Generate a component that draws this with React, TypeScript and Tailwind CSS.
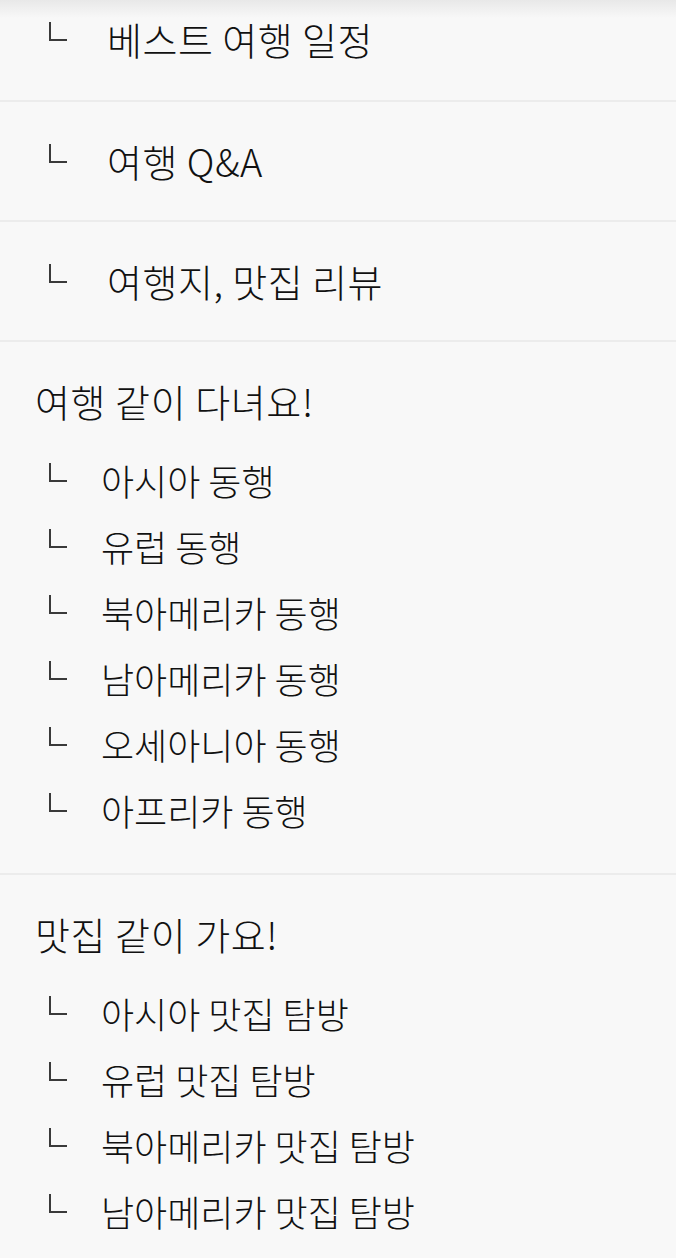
const font = "font-['Noto_Sans_CJK_KR','Noto_Sans',sans-serif]";

const boards = ['베스트 여행 일정', '여행 Q&A', '여행지, 맛집 리뷰'];

const groups = [
  {
    title: '여행 같이 다녀요!',
    items: ['아시아 동행', '유럽 동행', '북아메리카 동행', '남아메리카 동행', '오세아니아 동행', '아프리카 동행'],
  },
  {
    title: '맛집 같이 가요!',
    items: ['아시아 맛집 탐방', '유럽 맛집 탐방', '북아메리카 맛집 탐방', '남아메리카 맛집 탐방'],
  },
];

function Corner() {
  return <span className="block w-[18px] h-[19px] border-l-2 border-b-2 border-[#3a3a3a] -translate-y-[8px]" />;
}

export default function App() {
  return (
    <div className={`w-[676px] h-[1258px] overflow-hidden bg-[#f8f8f8] text-[#111] font-light ${font}`}>
      {boards.map((b, i) => (
        <div
          key={b}
          className={`flex items-center border-b-2 border-[#ececec] ${
            i === 0 ? 'h-[102px] pb-[22px] bg-[linear-gradient(to_bottom,#e8e8e8,#f8f8f8_18px)]' : 'h-[120px]'
          }`}
        >
          <div className="w-[107px] pl-[49px]">
            <Corner />
          </div>
          <span className="text-[38px] leading-none tracking-[0.5px]">{b}</span>
        </div>
      ))}

      {groups.map((g) => (
        <div key={g.title} className="pt-[26px] pb-[30px] border-b-2 border-[#ececec]">
          <div className="h-[66px] flex items-center pl-[35px] text-[38px] leading-none tracking-[0.6px]">{g.title}</div>
          <ul className="mt-[13px]">
            {g.items.map((it) => (
              <li key={it} className="h-[66px] flex items-center">
                <div className="w-[101px] pl-[49px]">
                  <Corner />
                </div>
                <span className="text-[36px] leading-none">{it}</span>
              </li>
            ))}
          </ul>
        </div>
      ))}
    </div>
  );
}
